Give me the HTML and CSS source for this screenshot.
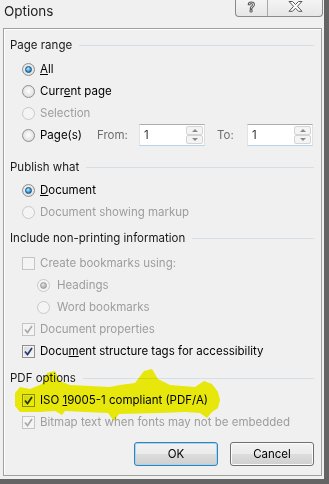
FILE: index.html
```html
<!DOCTYPE html>
<html lang="en">
<head>
    <meta charset="UTF-8">
    <meta name="viewport" content="width=device-width, initial-scale=1.0">
    <title>Options</title>
    <link rel="stylesheet" href="styles.css">
</head>
<body>
    <div class="window">
        <div class="titlebar">
            <span class="title">Options</span>
            <div class="caption-buttons">
                <span class="cap-btn help">?</span>
                <span class="cap-btn close">
                    <svg width="15" height="11" viewBox="0 0 15 11">
                        <polygon points="1,0.5 4.5,0.5 7.5,3.5 10.5,0.5 14,0.5 9.4,5.3 14,10.3 10.5,10.3 7.5,7.2 4.5,10.3 1,10.3 5.6,5.3" fill="#fff" stroke="#555" stroke-width="1" stroke-linejoin="round"/>
                    </svg>
                </span>
            </div>
        </div>

        <div class="panel">
            <div class="group range">
                <div class="group-title">Page range</div>
                <div class="rows">
                    <div class="opt"><span class="radio checked"></span><span><u>A</u>ll</span></div>
                    <div class="opt"><span class="radio"></span><span>Curr<u>e</u>nt page</span></div>
                    <div class="opt disabled"><span class="radio"></span><span>Selection</span></div>
                    <div class="opt">
                        <span class="radio"></span><span class="pages-label">Pa<u>g</u>e(s)</span>
                        <span class="field-label from">From:</span>
                        <div class="spin"><span class="spin-value">1</span><span class="spin-buttons"><span class="up"></span><span class="down"></span></span></div>
                        <span class="field-label to">To:</span>
                        <div class="spin"><span class="spin-value">1</span><span class="spin-buttons"><span class="up"></span><span class="down"></span></span></div>
                    </div>
                </div>
            </div>

            <div class="group publish">
                <div class="group-title">Publish what</div>
                <div class="rows">
                    <div class="opt"><span class="radio checked"></span><span><u>D</u>ocument</span></div>
                    <div class="opt disabled"><span class="radio"></span><span>Document showing markup</span></div>
                </div>
            </div>

            <div class="group include">
                <div class="group-title">Include non-printing information</div>
                <div class="rows">
                    <div class="opt disabled"><span class="check"></span><span>Create bookmarks using:</span></div>
                    <div class="opt sub disabled"><span class="radio checked"></span><span>Headings</span></div>
                    <div class="opt sub disabled"><span class="radio"></span><span>Word bookmarks</span></div>
                    <div class="opt disabled"><span class="check checked"><svg viewBox="0 0 11 11"><path d="M2 5.5 L4.5 8.5 L9 2" /></svg></span><span>Document properties</span></div>
                    <div class="opt"><span class="check checked"><svg viewBox="0 0 11 11"><path d="M2 5.5 L4.5 8.5 L9 2" /></svg></span><span>Docu<u>m</u>ent structure tags for accessibility</span></div>
                </div>
            </div>

            <div class="group pdf">
                <div class="group-title">PDF options</div>
                <div class="rows">
                    <div class="opt"><span class="check checked"><svg viewBox="0 0 11 11"><path d="M2 5.5 L4.5 8.5 L9 2" /></svg></span><span>ISO <u>1</u>9005-1 compliant (PDF/A)</span></div>
                    <div class="opt disabled"><span class="check checked"><svg viewBox="0 0 11 11"><path d="M2 5.5 L4.5 8.5 L9 2" /></svg></span><span>Bitmap text when fonts may not be embedded</span></div>
                </div>
            </div>

            <div class="actions">
                <button class="btn default">OK</button>
                <button class="btn">Cancel</button>
            </div>
        </div>

        <!-- highlighter scribble drawn over the ISO option -->
        <svg class="highlight" width="329" height="484" viewBox="0 0 329 484">
            <polygon fill="#f6f60c" points="15,393 20,387 30,389 42,384 47,373 55,371 60,381 70,385 90,386 110,387 120,385 135,383 144,371 152,369 158,379 170,385 195,387 204,381 212,384 218,392 220,400 218,408 212,412 207,418 200,413 185,412 160,413 119,414 114,421 108,413 85,412 65,411 62,415 55,411 40,412 20,412 15,406"/>
        </svg>
    </div>
</body>
</html>
```
FILE: styles.css
```css
html {
    background: #646464;
}

body {
    margin: 0;
    font-family: Inter, "Noto Sans", sans-serif;
    font-size: 11.5px;
    color: #000;
}

.window {
    position: relative;
    width: 324px;
    height: 479px;
    background: #f0f0f0;
    overflow: hidden;
}

.titlebar {
    height: 28px;
    display: flex;
    justify-content: space-between;
    align-items: flex-start;
}

.title {
    margin: 3px 0 0 4px;
    font-size: 13.5px;
    color: #1e1e1e;
}

.caption-buttons {
    display: flex;
    height: 16px;
    margin-right: 1px;
    border: 1px solid #8a8a8a;
    border-top: none;
    border-radius: 0 0 4px 4px;
    background: linear-gradient(#f4f4f4, #e6e6e6);
}

.cap-btn {
    display: flex;
    justify-content: center;
    align-items: flex-start;
}

.help {
    width: 31px;
    border-right: 1px solid #a8a8a8;
    font-weight: bold;
    font-size: 13px;
    line-height: 14px;
    color: #fff;
    -webkit-text-stroke: 1px #555;
}

.close {
    width: 54px;
    padding-top: 1px;
}

.panel {
    margin-left: 3px;
    width: 319px;
    height: 448px;
    box-sizing: border-box;
    border: 1px solid #a0a0a0;
    box-shadow: inset 1px 1px 0 #fff;
    padding: 6px 7px 0 6px;
}

.group-title {
    height: 20px;
    display: flex;
    align-items: center;
    color: #1a1a1a;
}

.group-title::after {
    content: "";
    flex: 1;
    height: 1px;
    margin-left: 7px;
    background: #d5dfe5;
}

.range .rows { margin-top: 3px; }
.publish { margin-top: 11px; }
.publish .rows { margin-top: 2px; }
.include { margin-top: 5px; }
.include .rows { margin-top: 4px; }
.pdf { margin-top: 6px; }
.pdf .rows { margin-top: 1px; }

.opt {
    height: 22px;
    display: flex;
    align-items: center;
    padding-left: 12px;
}

.opt.sub {
    padding-left: 27px;
}

.opt.sub .radio {
    margin-right: 7px;
}

.opt.disabled {
    color: #9d9d9d;
}

u {
    text-decoration-thickness: 1px;
    text-underline-offset: 1px;
}

.radio {
    position: relative;
    width: 13px;
    height: 13px;
    box-sizing: border-box;
    margin-right: 5px;
    border: 1px solid #8e8f8f;
    border-radius: 50%;
    background: radial-gradient(circle at 50% 45%, #fdfdfd 0, #ececec 45%, #cfd1d3 100%);
}

.radio.checked::after {
    content: "";
    position: absolute;
    left: 2px;
    top: 2px;
    width: 7px;
    height: 7px;
    box-sizing: border-box;
    border-radius: 50%;
    border: 1px solid #1c4b7b;
    background: radial-gradient(circle at 40% 35%, #c4efff 0, #3aa5e0 50%, #175f9e 100%);
}

.disabled .radio {
    border-color: #c8c8c8;
    background: #f4f4f4;
}

.disabled .radio.checked::after {
    border-color: #9c9c9c;
    background: radial-gradient(circle at 40% 35%, #e8e8e8 0, #b4b4b4 60%, #a0a0a0 100%);
}

.check {
    width: 13px;
    height: 13px;
    box-sizing: border-box;
    margin-right: 5px;
    border: 1px solid #8e8f8f;
    background: linear-gradient(135deg, #d6d8db, #fafafa);
    box-shadow: inset 0 0 0 1px #f2f2f2;
    display: flex;
}

.check svg {
    width: 11px;
    height: 11px;
}

.check path {
    fill: none;
    stroke: #24386b;
    stroke-width: 1.7;
}

.disabled .check {
    border-color: #c5c5c5;
    background: #f4f4f4;
    box-shadow: none;
}

.disabled .check path {
    stroke: #aaa;
}

.pages-label {
    width: 57px;
}

.field-label {
    color: #6d6d6d;
}

.from {
    width: 42px;
}

.to {
    margin-left: 12px;
    width: 30px;
}

.spin {
    width: 66px;
    height: 22px;
    box-sizing: border-box;
    display: flex;
    background: #fff;
    border: 1px solid #abadb3;
    border-right-color: #dbdfe6;
    border-bottom-color: #b9d3ea;
    border-left-color: #e2e3ea;
}

.spin-value {
    flex: 1;
    padding: 3px 0 0 4px;
    color: #333;
}

.spin-buttons {
    width: 17px;
    display: flex;
    flex-direction: column;
    padding: 1px 1px 1px 0;
}

.spin-buttons span {
    flex: 1;
    border: 1px solid #d4d4d4;
    border-radius: 2px;
    background: #f4f4f4;
    display: flex;
    justify-content: center;
    align-items: center;
}

.spin-buttons .up::after {
    content: "";
    border: 3px solid transparent;
    border-top: none;
    border-bottom: 3px solid #8a8a8a;
}

.spin-buttons .down::after {
    content: "";
    border: 3px solid transparent;
    border-bottom: none;
    border-top: 3px solid #8a8a8a;
}

.actions {
    margin-top: 9px;
    display: flex;
    justify-content: flex-end;
    gap: 12px;
}

.btn {
    width: 84px;
    height: 24px;
    font-family: inherit;
    font-size: 11.5px;
    color: #000;
    border: 1px solid #707070;
    border-radius: 3px;
    background: linear-gradient(#f2f2f2 0%, #ebebeb 50%, #dddddd 51%, #cfcfcf 100%);
    box-shadow: inset 0 0 0 1px #fbfbfb;
    padding: 0;
}

.btn.default {
    border-color: #3c7fb1;
    box-shadow: inset 0 0 0 1px #9fd8f4;
}

.highlight {
    position: absolute;
    left: 0;
    top: 0;
    pointer-events: none;
    mix-blend-mode: multiply;
}
```
